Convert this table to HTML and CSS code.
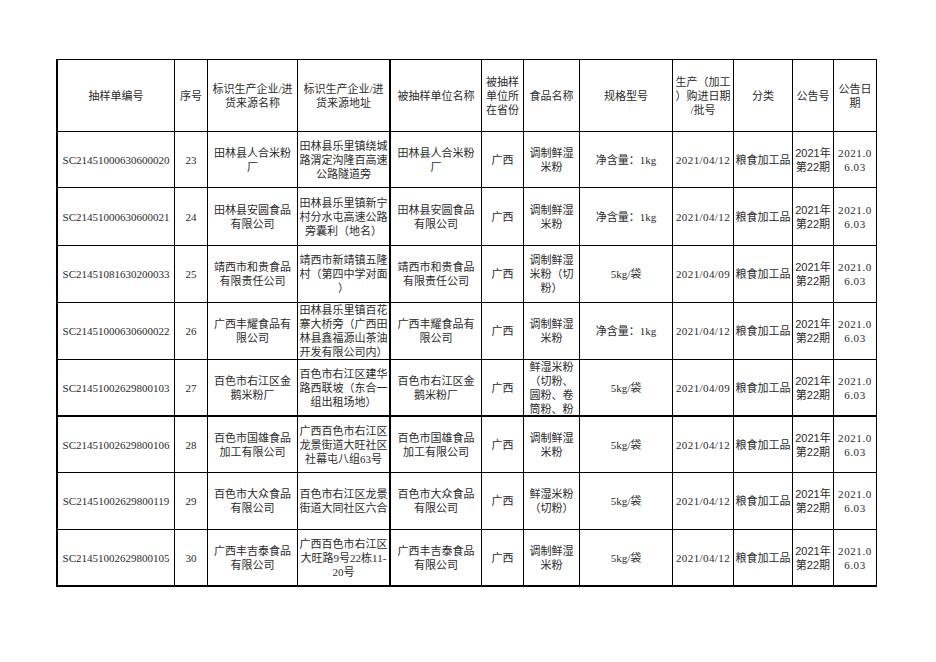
FILE: index.html
```html
<!DOCTYPE html>
<html lang="zh">
<head>
<meta charset="utf-8">
<title>抽样单</title>
<link rel="stylesheet" href="styles.css">
</head>
<body>
<div class="sheet">
  <div class="row head">
    <div class="c">抽样单编号</div>
    <div class="c">序号</div>
    <div class="c">标识生产企业/进<br>货来源名称</div>
    <div class="c tr">标识生产企业/进<br>货来源地址</div>
    <div class="c">被抽样单位名称</div>
    <div class="c">被抽样<br>单位所<br>在省份</div>
    <div class="c">食品名称</div>
    <div class="c">规格型号</div>
    <div class="c">生产（加工<br>）购进日期<br>/批号</div>
    <div class="c">分类</div>
    <div class="c">公告号</div>
    <div class="c">公告日<br>期</div>
  </div>
  <div class="row">
    <div class="c">SC21451000630600020</div>
    <div class="c">23</div>
    <div class="c">田林县人合米粉<br>厂</div>
    <div class="c tr">田林县乐里镇绕城<br>路渭定沟隆百高速<br>公路隧道旁</div>
    <div class="c">田林县人合米粉<br>厂</div>
    <div class="c">广西</div>
    <div class="c">调制鲜湿<br>米粉</div>
    <div class="c">净含量：1kg</div>
    <div class="c date">2021/04/12</div>
    <div class="c">粮食加工品</div>
    <div class="c sans">2021年<br>第22期</div>
    <div class="c pub">2021.0<br>6.03</div>
  </div>
  <div class="row">
    <div class="c">SC21451000630600021</div>
    <div class="c">24</div>
    <div class="c">田林县安圆食品<br>有限公司</div>
    <div class="c tr">田林县乐里镇新宁<br>村分水屯高速公路<br>旁囊利（地名）</div>
    <div class="c">田林县安圆食品<br>有限公司</div>
    <div class="c">广西</div>
    <div class="c">调制鲜湿<br>米粉</div>
    <div class="c">净含量：1kg</div>
    <div class="c date">2021/04/12</div>
    <div class="c">粮食加工品</div>
    <div class="c sans">2021年<br>第22期</div>
    <div class="c pub">2021.0<br>6.03</div>
  </div>
  <div class="row">
    <div class="c">SC21451081630200033</div>
    <div class="c">25</div>
    <div class="c">靖西市和贵食品<br>有限责任公司</div>
    <div class="c tr">靖西市新靖镇五隆<br>村（第四中学对面<br>）</div>
    <div class="c">靖西市和贵食品<br>有限责任公司</div>
    <div class="c">广西</div>
    <div class="c">调制鲜湿<br>米粉（切<br>粉）</div>
    <div class="c">5kg/袋</div>
    <div class="c date">2021/04/09</div>
    <div class="c">粮食加工品</div>
    <div class="c sans">2021年<br>第22期</div>
    <div class="c pub">2021.0<br>6.03</div>
  </div>
  <div class="row">
    <div class="c">SC21451000630600022</div>
    <div class="c">26</div>
    <div class="c">广西丰耀食品有<br>限公司</div>
    <div class="c tr">田林县乐里镇百花<br>寨大桥旁（广西田<br>林县鑫福源山茶油<br>开发有限公司内）</div>
    <div class="c">广西丰耀食品有<br>限公司</div>
    <div class="c">广西</div>
    <div class="c">调制鲜湿<br>米粉</div>
    <div class="c">净含量：1kg</div>
    <div class="c date">2021/04/12</div>
    <div class="c">粮食加工品</div>
    <div class="c sans">2021年<br>第22期</div>
    <div class="c pub">2021.0<br>6.03</div>
  </div>
  <div class="row thick">
    <div class="c">SC21451002629800103</div>
    <div class="c">27</div>
    <div class="c">百色市右江区金<br>鹅米粉厂</div>
    <div class="c tr">百色市右江区建华<br>路西联坡（东合一<br>组出租场地）</div>
    <div class="c">百色市右江区金<br>鹅米粉厂</div>
    <div class="c">广西</div>
    <div class="c top">鲜湿米粉<br>（切粉、<br>圆粉、卷<br>筒粉、粉<br>虫）</div>
    <div class="c">5kg/袋</div>
    <div class="c date">2021/04/09</div>
    <div class="c">粮食加工品</div>
    <div class="c sans">2021年<br>第22期</div>
    <div class="c pub">2021.0<br>6.03</div>
  </div>
  <div class="row">
    <div class="c">SC21451002629800106</div>
    <div class="c">28</div>
    <div class="c">百色市国雄食品<br>加工有限公司</div>
    <div class="c tr">广西百色市右江区<br>龙景街道大旺社区<br>社幕屯八组63号</div>
    <div class="c">百色市国雄食品<br>加工有限公司</div>
    <div class="c">广西</div>
    <div class="c">调制鲜湿<br>米粉</div>
    <div class="c">5kg/袋</div>
    <div class="c date">2021/04/12</div>
    <div class="c">粮食加工品</div>
    <div class="c sans">2021年<br>第22期</div>
    <div class="c pub">2021.0<br>6.03</div>
  </div>
  <div class="row">
    <div class="c">SC21451002629800119</div>
    <div class="c">29</div>
    <div class="c">百色市大众食品<br>有限公司</div>
    <div class="c tr">百色市右江区龙景<br>街道大同社区六合</div>
    <div class="c">百色市大众食品<br>有限公司</div>
    <div class="c">广西</div>
    <div class="c">鲜湿米粉<br>（切粉）</div>
    <div class="c">5kg/袋</div>
    <div class="c date">2021/04/12</div>
    <div class="c">粮食加工品</div>
    <div class="c sans">2021年<br>第22期</div>
    <div class="c pub">2021.0<br>6.03</div>
  </div>
  <div class="row thick">
    <div class="c">SC21451002629800105</div>
    <div class="c">30</div>
    <div class="c">广西丰吉泰食品<br>有限公司</div>
    <div class="c tr">广西百色市右江区<br>大旺路9号22栋11-<br>20号</div>
    <div class="c">广西丰吉泰食品<br>有限公司</div>
    <div class="c">广西</div>
    <div class="c">调制鲜湿<br>米粉</div>
    <div class="c">5kg/袋</div>
    <div class="c date">2021/04/12</div>
    <div class="c">粮食加工品</div>
    <div class="c sans">2021年<br>第22期</div>
    <div class="c pub">2021.0<br>6.03</div>
  </div>
</div>
</body>
</html>
```

FILE: styles.css
```css
* { box-sizing: border-box; }
html, body { margin: 0; background: #fff; }
body {
  padding: 59px 0 0 56px;
  font-family: "Liberation Serif", "Noto Sans CJK SC", serif;
  font-size: 11px;
  line-height: 14px;
  color: #2a2a2a;
}
.sheet {
  display: grid;
  width: 821px;
  grid-template-columns: 117px 33px 90px 93px 91px 42px 56px 93px 61px 59px 41px 43px;
  grid-template-rows: 72px 56px 58px 57px 57px 57px 56px 57px 57px;
  border-top: 1px solid #000;
  border-left: 2px solid #000;
}
.row { display: contents; }
.c {
  display: flex;
  align-items: center;
  justify-content: center;
  text-align: center;
  white-space: nowrap;
  overflow: hidden;
  padding: 0 1px;
  border-right: 1px solid #000;
  border-bottom: 1px solid #000;
}
.c.tr { border-right-width: 2px; }
.row.thick > .c { border-bottom-width: 2px; }
.c.top { align-items: flex-start; padding-top: 0; }
.c.sans { font-family: "Liberation Sans", "Noto Sans CJK SC", sans-serif; }
.c.date { letter-spacing: 0.4px; }
.c.pub { letter-spacing: 0.6px; }
```
